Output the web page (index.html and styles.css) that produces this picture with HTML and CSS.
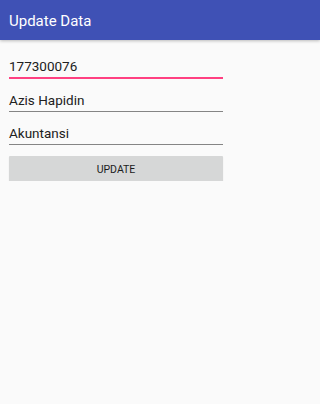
FILE: index.html
```html
<!DOCTYPE html>
<html>
<head>
<meta charset="utf-8">
<link rel="stylesheet" href="styles.css">
</head>
<body>
<header class="appbar"><span class="title">Update Data</span></header>
<main class="form">
  <div class="field field-active">177300076</div>
  <div class="field">Azis Hapidin</div>
  <div class="field">Akuntansi</div>
  <div class="button">UPDATE</div>
</main>
</body>
</html>
```
FILE: styles.css
```css
html, body {
  margin: 0;
  padding: 0;
  background: #fafafa;
  font-family: Roboto, "Noto Sans", sans-serif;
}
.appbar {
  height: 40px;
  background: #3f51b5;
  padding-left: 9px;
  display: flex;
  align-items: center;
  box-shadow: 0 1px 3px rgba(0,0,0,0.25);
}
.title {
  color: #ffffff;
  font-size: 15px;
  line-height: 18px;
  padding-top: 1px;
}
.form {
  width: 235px;
  box-sizing: border-box;
  padding: 18px 12px 0 9px;
  display: flex;
  flex-direction: column;
}
.field {
  font-size: 13.5px;
  line-height: 16px;
  color: #212121;
  padding-bottom: 3px;
  border-bottom: 1px solid #858585;
  margin-bottom: 13px;
}
.field-active {
  border-bottom: 2px solid #ff4081;
}
.field:nth-child(3) {
  margin-bottom: 11px;
}
.button {
  height: 25px;
  background: #d6d7d7;
  border-radius: 1px;
  box-shadow: 0 1px 1px rgba(0,0,0,0.18);
  display: flex;
  align-items: center;
  justify-content: center;
  font-size: 10.5px;
  color: #1c1c1c;
  padding-top: 1px;
  box-sizing: border-box;
}
```
